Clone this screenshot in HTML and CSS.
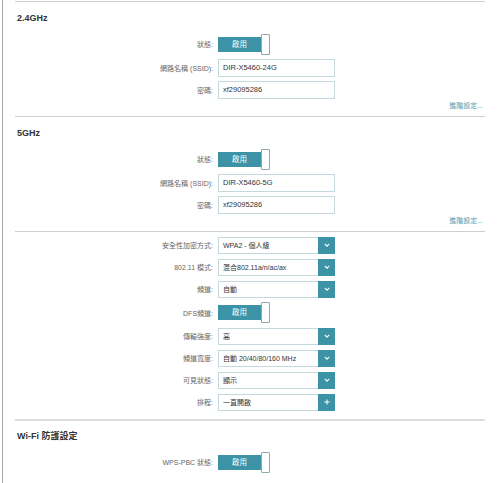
FILE: index.html
```html
<!DOCTYPE html>
<html>
<head>
<meta charset="utf-8">
<link rel="stylesheet" href="styles.css">
</head>
<body>
<div class="page">
  <section class="sec">
    <h2 class="title">2.4GHz</h2>
    <div class="form">
      <div class="row trow"><span class="lbl">狀態:</span><div class="toggle"><span class="on">啟用</span><span class="knob"></span></div></div>
      <div class="row"><span class="lbl">網路名稱 (SSID):</span><div class="input">DIR-X5460-24G</div></div>
      <div class="row"><span class="lbl">密碼:</span><div class="input">xf29095286</div></div>
    </div>
    <div class="adv">進階設定...</div>
  </section>
  <section class="sec">
    <h2 class="title">5GHz</h2>
    <div class="form">
      <div class="row trow"><span class="lbl">狀態:</span><div class="toggle"><span class="on">啟用</span><span class="knob"></span></div></div>
      <div class="row"><span class="lbl">網路名稱 (SSID):</span><div class="input">DIR-X5460-5G</div></div>
      <div class="row"><span class="lbl">密碼:</span><div class="input">xf29095286</div></div>
    </div>
    <div class="adv">進階設定...</div>
  </section>
  <section class="sec notitle">
    <div class="form">
      <div class="row"><span class="lbl">安全性加密方式:</span><div class="select"><span class="val">WPA2 - 個人級</span><span class="btn"><svg viewBox="0 0 10 10" width="8" height="8"><path d="M2.2 3.6 L5 6.4 L7.8 3.6" fill="none" stroke="#fff" stroke-width="1.4"/></svg></span></div></div>
      <div class="row"><span class="lbl">802.11 模式:</span><div class="select"><span class="val">混合802.11a/n/ac/ax</span><span class="btn"><svg viewBox="0 0 10 10" width="8" height="8"><path d="M2.2 3.6 L5 6.4 L7.8 3.6" fill="none" stroke="#fff" stroke-width="1.4"/></svg></span></div></div>
      <div class="row"><span class="lbl">頻道:</span><div class="select"><span class="val">自動</span><span class="btn"><svg viewBox="0 0 10 10" width="8" height="8"><path d="M2.2 3.6 L5 6.4 L7.8 3.6" fill="none" stroke="#fff" stroke-width="1.4"/></svg></span></div></div>
      <div class="row trow tight"><span class="lbl">DFS頻道:</span><div class="toggle"><span class="on">啟用</span><span class="knob"></span></div></div>
      <div class="row"><span class="lbl">傳輸強度:</span><div class="select"><span class="val">高</span><span class="btn"><svg viewBox="0 0 10 10" width="8" height="8"><path d="M2.2 3.6 L5 6.4 L7.8 3.6" fill="none" stroke="#fff" stroke-width="1.4"/></svg></span></div></div>
      <div class="row"><span class="lbl">頻道寬度:</span><div class="select"><span class="val">自動 20/40/80/160 MHz</span><span class="btn"><svg viewBox="0 0 10 10" width="8" height="8"><path d="M2.2 3.6 L5 6.4 L7.8 3.6" fill="none" stroke="#fff" stroke-width="1.4"/></svg></span></div></div>
      <div class="row"><span class="lbl">可見狀態:</span><div class="select"><span class="val">顯示</span><span class="btn"><svg viewBox="0 0 10 10" width="8" height="8"><path d="M2.2 3.6 L5 6.4 L7.8 3.6" fill="none" stroke="#fff" stroke-width="1.4"/></svg></span></div></div>
      <div class="row"><span class="lbl">排程:</span><div class="select"><span class="val">一直開啟</span><span class="btn"><svg viewBox="0 0 10 10" width="8" height="8"><path d="M5 1.8 V8.2 M1.8 5 H8.2" fill="none" stroke="#fff" stroke-width="1.3"/></svg></span></div></div>
    </div>
  </section>
  <section class="sec thick">
    <h2 class="title">Wi-Fi 防護設定</h2>
    <div class="form">
      <div class="row trow"><span class="lbl">WPS-PBC 狀態:</span><div class="toggle"><span class="on">啟用</span><span class="knob"></span></div></div>
    </div>
  </section>
</div>
</body>
</html>
```
FILE: styles.css
```css
html, body {
  margin: 0;
  padding: 0;
  background: #fff;
}
body {
  width: 500px;
  height: 483px;
  overflow: hidden;
  font-family: "Liberation Sans", "Noto Sans CJK TC", sans-serif;
}
.page {
  margin-left: 2px;
  border-left: 1px solid #a9a9a9;
  min-height: 483px;
  padding-top: 1px;
  box-sizing: border-box;
}
.sec {
  margin: 0 15px 0 12px;
  border-top: 1px solid #cfcfcf;
  padding: 10px 2px 5px 2px;
}
.sec.notitle {
  padding-top: 4px;
  padding-bottom: 8px;
}
.sec.thick {
  border-top: 2px solid #dcdcdc;
  padding-top: 9px;
}
.title {
  margin: 0 0 9px 0;
  font-size: 9px;
  line-height: 12px;
  font-weight: bold;
  color: #333;
}
.form {
  display: flex;
  flex-direction: column;
  gap: 4px;
}
.row {
  display: flex;
  align-items: center;
  height: 18px;
  gap: 5px;
}
.row.trow {
  height: 22px;
}
.row.trow.tight {
  height: 21px;
}
.lbl {
  width: 196px;
  text-align: right;
  font-size: 7px;
  color: #666;
  white-space: nowrap;
}
.input {
  box-sizing: border-box;
  width: 117px;
  height: 18px;
  border: 1px solid #c3d9de;
  padding-left: 4px;
  font-size: 7.5px;
  line-height: 16px;
  color: #333;
}
.select {
  box-sizing: border-box;
  width: 117px;
  height: 17px;
  border: 1px solid #c3d9de;
  display: flex;
  align-items: stretch;
}
.select .val {
  flex: 1;
  padding-left: 4px;
  font-size: 7px;
  line-height: 15px;
  color: #333;
  white-space: nowrap;
}
.select .btn {
  width: 17px;
  margin: -1px -1px -1px 0;
  background: #3b93a5;
  display: flex;
  align-items: center;
  justify-content: center;
}
.toggle {
  display: flex;
  align-items: center;
  height: 21px;
}
.toggle .on {
  width: 43px;
  height: 15px;
  background: #3b93a5;
  color: #fff;
  font-size: 7.5px;
  line-height: 15px;
  text-align: center;
}
.toggle .knob {
  box-sizing: border-box;
  width: 9px;
  height: 21px;
  border: 1px solid #8fa9b3;
  border-radius: 1px;
  background: #fff;
}
.adv {
  margin-top: 2px;
  text-align: right;
  font-size: 7px;
  line-height: 10px;
  color: #5b9aaa;
}
```
